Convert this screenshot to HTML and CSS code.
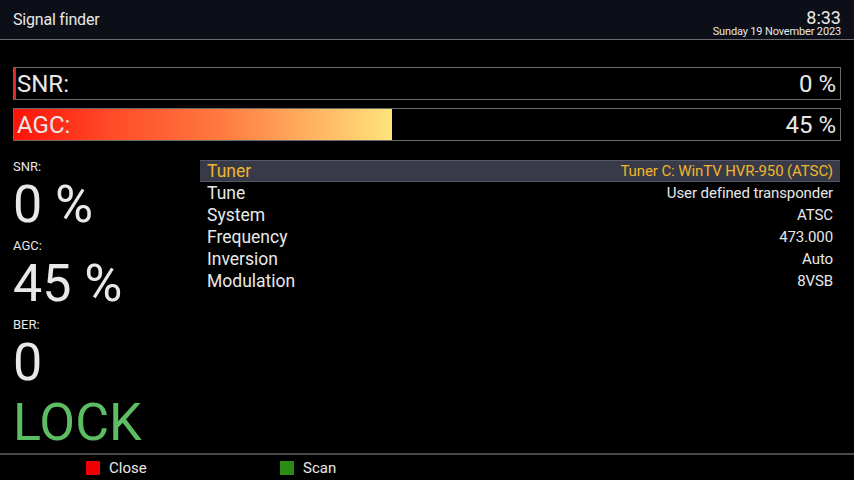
FILE: index.html
```html
<!DOCTYPE html>
<html lang="en">
<head>
  <meta charset="UTF-8">
  <meta name="viewport" content="width=device-width, initial-scale=1">
  <title>Signal finder</title>
  <link rel="stylesheet" href="styles.css">
</head>
<body>

<div class="screen">
  <div class="header">
    <div class="title">Signal finder</div>
    <div class="clock">
      <div class="time">8:33</div>
      <div class="date">Sunday 19 November 2023</div>
    </div>
  </div>

  <div class="bars">
    <div class="bar">
      <div class="fill fill-snr" style="width: 0.3%"></div>
      <span class="bar-label">SNR:</span>
      <span class="bar-value">0 %</span>
    </div>
    <div class="bar">
      <div class="fill" style="width: 45.8%"></div>
      <span class="bar-label">AGC:</span>
      <span class="bar-value">45 %</span>
    </div>
  </div>

  <div class="content">
    <div class="stats">
      <div class="stat-label">SNR:</div>
      <div class="stat-value">0 %</div>
      <div class="stat-label">AGC:</div>
      <div class="stat-value">45 %</div>
      <div class="stat-label">BER:</div>
      <div class="stat-value">0</div>
      <div class="lock">LOCK</div>
    </div>

    <div class="list">
      <div class="row selected"><span class="key">Tuner</span><span class="val">Tuner C: WinTV HVR-950 (ATSC)</span></div>
      <div class="row"><span class="key">Tune</span><span class="val">User defined transponder</span></div>
      <div class="row"><span class="key">System</span><span class="val">ATSC</span></div>
      <div class="row"><span class="key">Frequency</span><span class="val">473.000</span></div>
      <div class="row"><span class="key">Inversion</span><span class="val">Auto</span></div>
      <div class="row"><span class="key">Modulation</span><span class="val">8VSB</span></div>
    </div>
  </div>

  <div class="footer">
    <div class="key-btn"><span class="sq red"></span>Close</div>
    <div class="key-btn"><span class="sq green"></span>Scan</div>
  </div>
</div>

</body>
</html>
```

FILE: styles.css
```css
* { box-sizing: border-box; }
body {
  margin: 0;
  background: #000;
  color: #e8e8e8;
  font-family: Roboto, 'Noto Sans', sans-serif;
}
.screen {
  width: 854px;
  height: 480px;
  display: flex;
  flex-direction: column;
  overflow: hidden;
}

/* header */
.header {
  height: 40px;
  background: #0c0f17;
  border-bottom: 1px solid #6c6c70;
  display: flex;
  justify-content: space-between;
  align-items: flex-start;
  padding: 0 13px;
}
.title {
  font-size: 16px;
  margin-top: 10px;
  letter-spacing: -0.2px;
}
.clock {
  text-align: right;
  margin-top: 9px;
}
.time {
  font-size: 18px;
  line-height: 17px;
}
.date {
  font-size: 11px;
  line-height: 12px;
  letter-spacing: -0.15px;
}

/* bars */
.bars {
  padding: 27px 13px 0 13px;
  display: flex;
  flex-direction: column;
  gap: 8px;
}
.bar {
  position: relative;
  height: 33px;
  border: 1px solid #6a6a6a;
  display: flex;
  justify-content: space-between;
  align-items: center;
  padding: 0 4px 0 3px;
  font-size: 24px;
}
.fill {
  position: absolute;
  left: 0;
  top: 0;
  bottom: 0;
  background: linear-gradient(to right, #ff1208, #ff4a28 25%, #ff7a40 55%, #ffe47c);
}
.fill-snr {
  background: #e0281e;
}
.bar-label, .bar-value {
  position: relative;
}

/* content */
.content {
  display: grid;
  grid-template-columns: 187px 1fr;
  padding: 0 14px 0 13px;
  flex: 1;
}
.stats {
  padding-top: 19px;
}
.stat-label {
  font-size: 13px;
  line-height: 13px;
  margin-bottom: 4px;
}
.stat-value {
  font-size: 52px;
  line-height: 56px;
  margin-bottom: 6px;
}
.lock {
  color: #5cbd63;
  font-size: 52px;
  line-height: 52px;
  margin-top: 4px;
}

.list {
  padding-top: 19px;
}
.row {
  height: 22px;
  display: flex;
  justify-content: space-between;
  align-items: center;
  padding: 0 7px;
}
.key {
  font-size: 17.5px;
}
.val {
  font-size: 15px;
  letter-spacing: -0.1px;
}
.row.selected {
  background: #393a48;
  border-top: 1px solid #55566a;
  border-bottom: 1px solid #55566a;
  color: #f0b52c;
}

/* footer */
.footer {
  height: 27px;
  border-top: 2px solid #4a4a4a;
  display: flex;
  align-items: center;
  padding-left: 86px;
  gap: 89px;
  font-size: 15px;
}
.key-btn {
  display: flex;
  align-items: center;
  gap: 9px;
  width: 105px;
}
.sq {
  width: 14px;
  height: 14px;
  display: inline-block;
}
.red { background: #f00000; }
.green { background: #2a8c14; }
```
